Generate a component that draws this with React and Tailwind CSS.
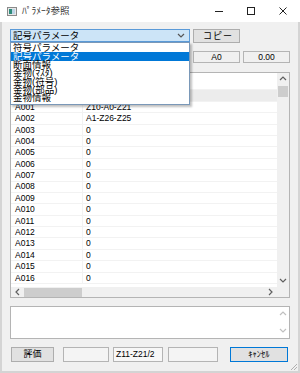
import React from 'react';

const rows = [
  ['', ''],
  ['', ''],
  ['A001', 'Z10-A0-Z21'],
  ['A002', 'A1-Z26-Z25'],
  ['A003', '0'],
  ['A004', '0'],
  ['A005', '0'],
  ['A006', '0'],
  ['A007', '0'],
  ['A008', '0'],
  ['A009', '0'],
  ['A010', '0'],
  ['A011', '0'],
  ['A012', '0'],
  ['A013', '0'],
  ['A014', '0'],
  ['A015', '0'],
  ['A016', '0'],
];

const options = ['符号パラメータ', '記号パラメータ', '断面情報', '金物(ﾏｽﾀ)', '金物(符号)', '金物(部品)', '金物情報'];

const Chevron = ({ dir = 'down', className = '' }) => {
  const d = {
    up: 'M1 5 L4 2 L7 5',
    down: 'M1 2 L4 5 L7 2',
    left: 'M5 1 L2 4 L5 7',
    right: 'M2 1 L5 4 L2 7',
  }[dir];
  return (
    <svg width="8" height="8" viewBox="0 0 8 8" className={className}>
      <path d={d} fill="none" stroke="currentColor" strokeWidth="1.2" />
    </svg>
  );
};

const Field = ({ className = '', children }) => (
  <div className={`h-[15px] border border-[#b4b4b4] bg-[#f4f4f4] flex items-center text-[9px] ${className}`}>
    {children}
  </div>
);

export default function App() {
  return (
    <div className="w-[300px] h-[373px] bg-white overflow-hidden relative font-['Liberation_Sans','Noto_Sans_CJK_JP',sans-serif] text-black">
      {/* title bar */}
      <div className="h-[22px] flex items-center relative">
        <svg width="10" height="9" viewBox="0 0 10 9" className="ml-[7px]">
          <rect x="0.5" y="0.5" width="9" height="8" fill="#e8e8e8" stroke="#8a8a8a" />
          <rect x="2" y="2" width="3" height="5" fill="#2e8b7a" />
          <rect x="5" y="2" width="3" height="5" fill="#bcd4e6" />
        </svg>
        <span className="ml-[5px] text-[9.5px] text-[#333] leading-none">ﾊﾟﾗﾒｰﾀ参照</span>
        <div className="ml-auto flex items-center">
          <svg width="10" height="10" viewBox="0 0 10 10" className="mr-[22px]">
            <path d="M1 5.5 H9" stroke="#222" strokeWidth="1" />
          </svg>
          <svg width="10" height="10" viewBox="0 0 10 10" className="mr-[22px]">
            <rect x="1.5" y="1.5" width="7" height="7" fill="none" stroke="#222" strokeWidth="1" />
          </svg>
          <svg width="10" height="10" viewBox="0 0 10 10" className="mr-[12px]">
            <path d="M1.5 1.5 L8.5 8.5 M8.5 1.5 L1.5 8.5" stroke="#222" strokeWidth="1" />
          </svg>
        </div>
      </div>

      {/* body */}
      <div className="h-[351px] bg-[#f0f0f0] border-l-[2px] border-r-[2px] border-b-[2px] border-[#d4d4d4] relative">
        <div className="pl-[8px] pt-[7px] flex gap-[3px] items-start">
          <div className="w-[180px] h-[13px] border border-[#5a9ad8] bg-[#cce4f7] flex items-center pl-[2px] pr-[4px]">
            <span className="text-[9.5px] leading-none">記号パラメータ</span>
            <Chevron dir="down" className="ml-auto text-[#555]" />
          </div>
          <div className="w-[47px] h-[14px] border border-[#adadad] bg-[#e1e1e1] flex items-center pl-[9px]">
            <span className="text-[9px] leading-none tracking-[1px]">コピー</span>
          </div>
        </div>

        <div className="pl-[191px] mt-[8px] flex gap-[3px]">
          <div className="w-[47px] h-[12px] border border-[#b4b4b4] bg-[#f0f0f0] flex items-center justify-center text-[8.5px] leading-none">A0</div>
          <div className="w-[47px] h-[12px] border border-[#b4b4b4] bg-[#f0f0f0] flex items-center justify-center text-[8.5px] leading-none">0.00</div>
        </div>

        {/* list view */}
        <div className="ml-[8px] mt-[9px] w-[280px] h-[226px] border border-[#b4b4b4] bg-white flex flex-col overflow-hidden">
          <div className="flex flex-1 min-h-0">
            <div className="flex-1 min-w-0 pt-[6px] overflow-hidden">
              {rows.map((r, i) => (
                <div
                  key={i}
                  className={`h-[11.4px] flex items-center border-b border-[#f2f2f2] text-[8.5px] leading-none ${i === 1 ? 'bg-[#ececec]' : ''}`}
                >
                  <div className="w-[72px] pl-[4px] h-full flex items-center border-r border-[#f2f2f2]">{r[0]}</div>
                  <div className="pl-[3px]">{r[1]}</div>
                </div>
              ))}
            </div>
            <div className="w-[12px] bg-[#f0f0f0] flex flex-col items-center">
              <Chevron dir="up" className="mt-[2px] text-[#606060]" />
              <div className="w-[10px] h-[11px] bg-[#cdcdcd] mt-[3px]" />
              <Chevron dir="down" className="mt-auto mb-[2px] text-[#606060]" />
            </div>
          </div>
          <div className="h-[10px] flex">
            <div className="flex-1 bg-[#f0f0f0] flex items-center">
              <Chevron dir="left" className="ml-[3px] text-[#606060]" />
              <div className="w-[58px] h-[9px] bg-[#cdcdcd] ml-[2px]" />
              <Chevron dir="right" className="ml-auto mr-[2px] text-[#606060]" />
            </div>
            <div className="w-[12px] bg-[#f0f0f0]" />
          </div>
        </div>

        {/* text area */}
        <div className="ml-[8px] mt-[8px] w-[280px] h-[33px] border border-[#b4b4b4] bg-white flex justify-end">
          <div className="w-[12px] flex flex-col items-center justify-between py-[3px]">
            <Chevron dir="up" className="text-[#c0c0c0]" />
            <Chevron dir="down" className="text-[#c0c0c0]" />
          </div>
        </div>

        {/* bottom buttons */}
        <div className="mt-[8px] pl-[9px] flex items-center">
          <div className="w-[43px] h-[15px] border border-[#adadad] bg-[#e1e1e1] flex items-center justify-center text-[9px] leading-none">評価</div>
          <Field className="ml-[9px] w-[46px]" />
          <Field className="ml-[4px] w-[50px] pl-[2px] bg-[#f7f7f7]">
            <span className="leading-none text-[8.5px]">Z11-Z21/2</span>
          </Field>
          <Field className="ml-[5px] w-[50px]" />
          <div className="ml-[12px] w-[58px] h-[15px] border border-[#0078d7] bg-[#e1e1e1] flex items-center justify-center text-[8.5px] leading-none">ｷｬﾝｾﾙ</div>
        </div>

        {/* size grip */}
        <svg width="8" height="8" viewBox="0 0 8 8" className="absolute right-[0px] bottom-[0px]">
          <path d="M7 1 L1 7 M7 4 L4 7" stroke="#b0b0b0" strokeWidth="1" />
        </svg>

        {/* open dropdown */}
        <div className="absolute left-[8px] top-[20px] w-[180px] h-[63px] bg-white border border-[#7a98b8] shadow-[2px_2px_2px_rgba(0,0,0,0.25)] z-10 pt-[1px]">
          {options.map((o, i) => (
            <div
              key={o}
              className={`h-[8.3px] flex items-center pl-[2px] text-[9.5px] leading-none overflow-visible ${i === 1 ? 'bg-[#0078d7] text-white' : ''}`}
            >
              {o}
            </div>
          ))}
        </div>
      </div>
    </div>
  );
}
